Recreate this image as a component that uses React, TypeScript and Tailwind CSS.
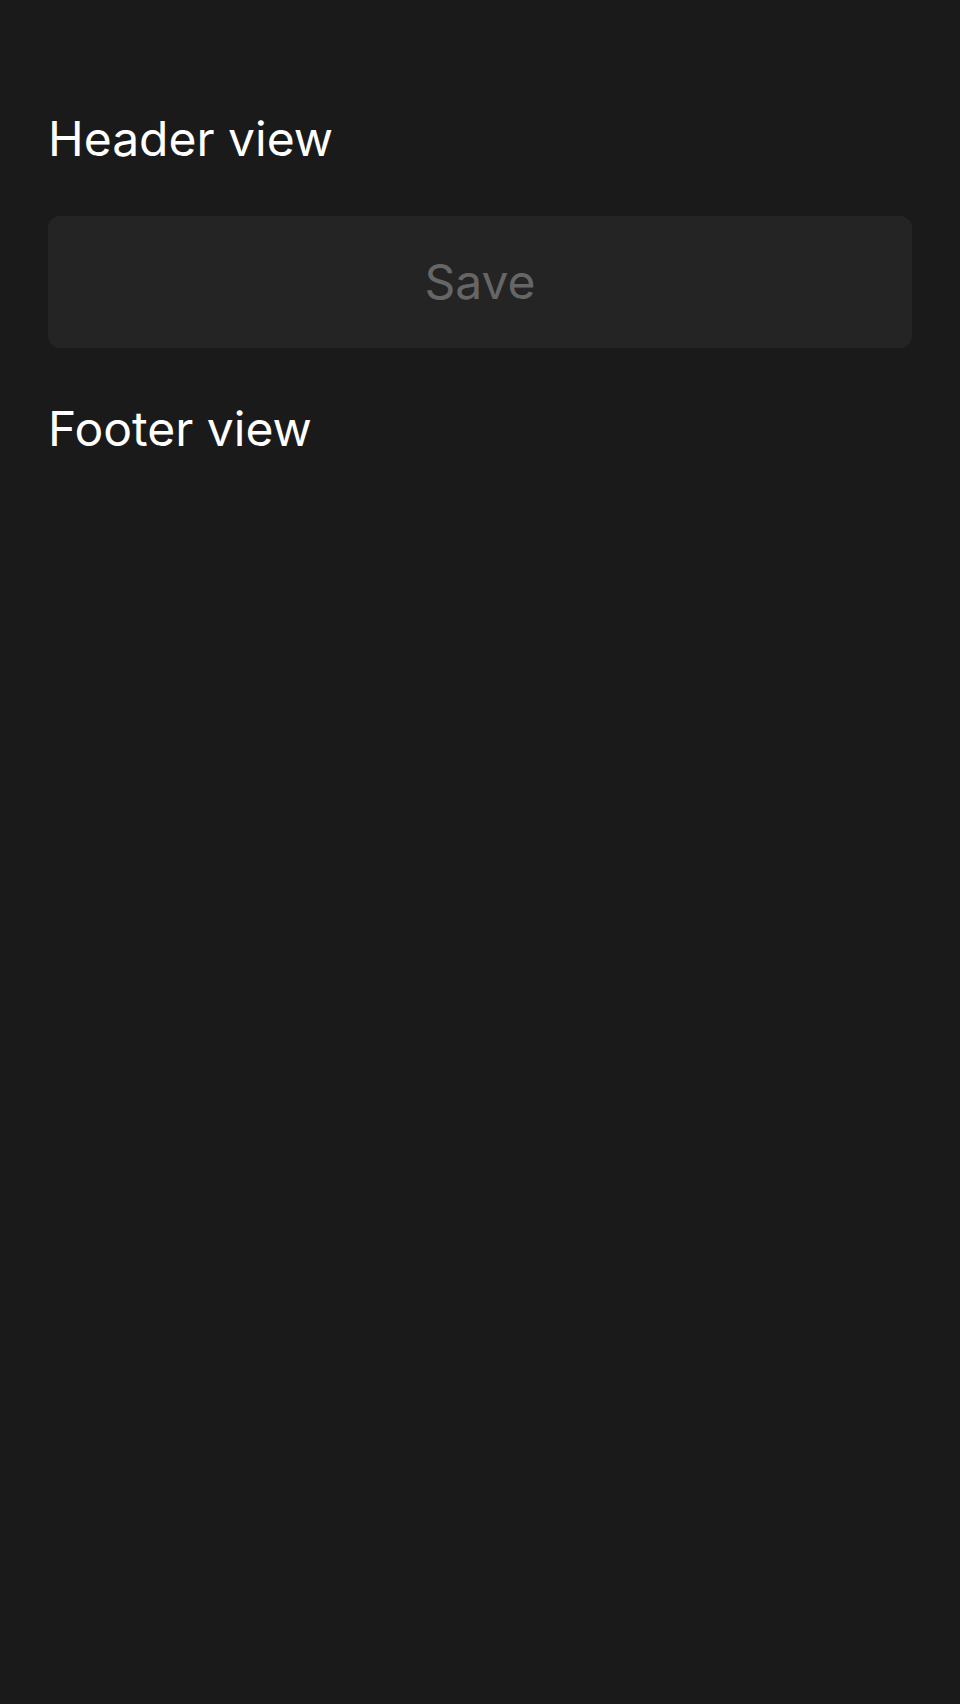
import React from "react";

const App = () => {
  return (
    <div className="min-h-[1704px] w-full bg-[#1a1a1a] px-12 pt-[110px] font-['Inter',sans-serif]">
      <h1 className="text-[48px] leading-[58px] font-normal text-white">Header view</h1>
      <button
        disabled
        className="mt-12 flex h-[132px] w-full items-center justify-center rounded-xl bg-[#242424] text-[48px] leading-[58px] text-[#666666]"
      >
        Save
      </button>
      <h2 className="mt-[52px] text-[48px] leading-[58px] font-normal text-white">Footer view</h2>
    </div>
  );
};

export default App;
